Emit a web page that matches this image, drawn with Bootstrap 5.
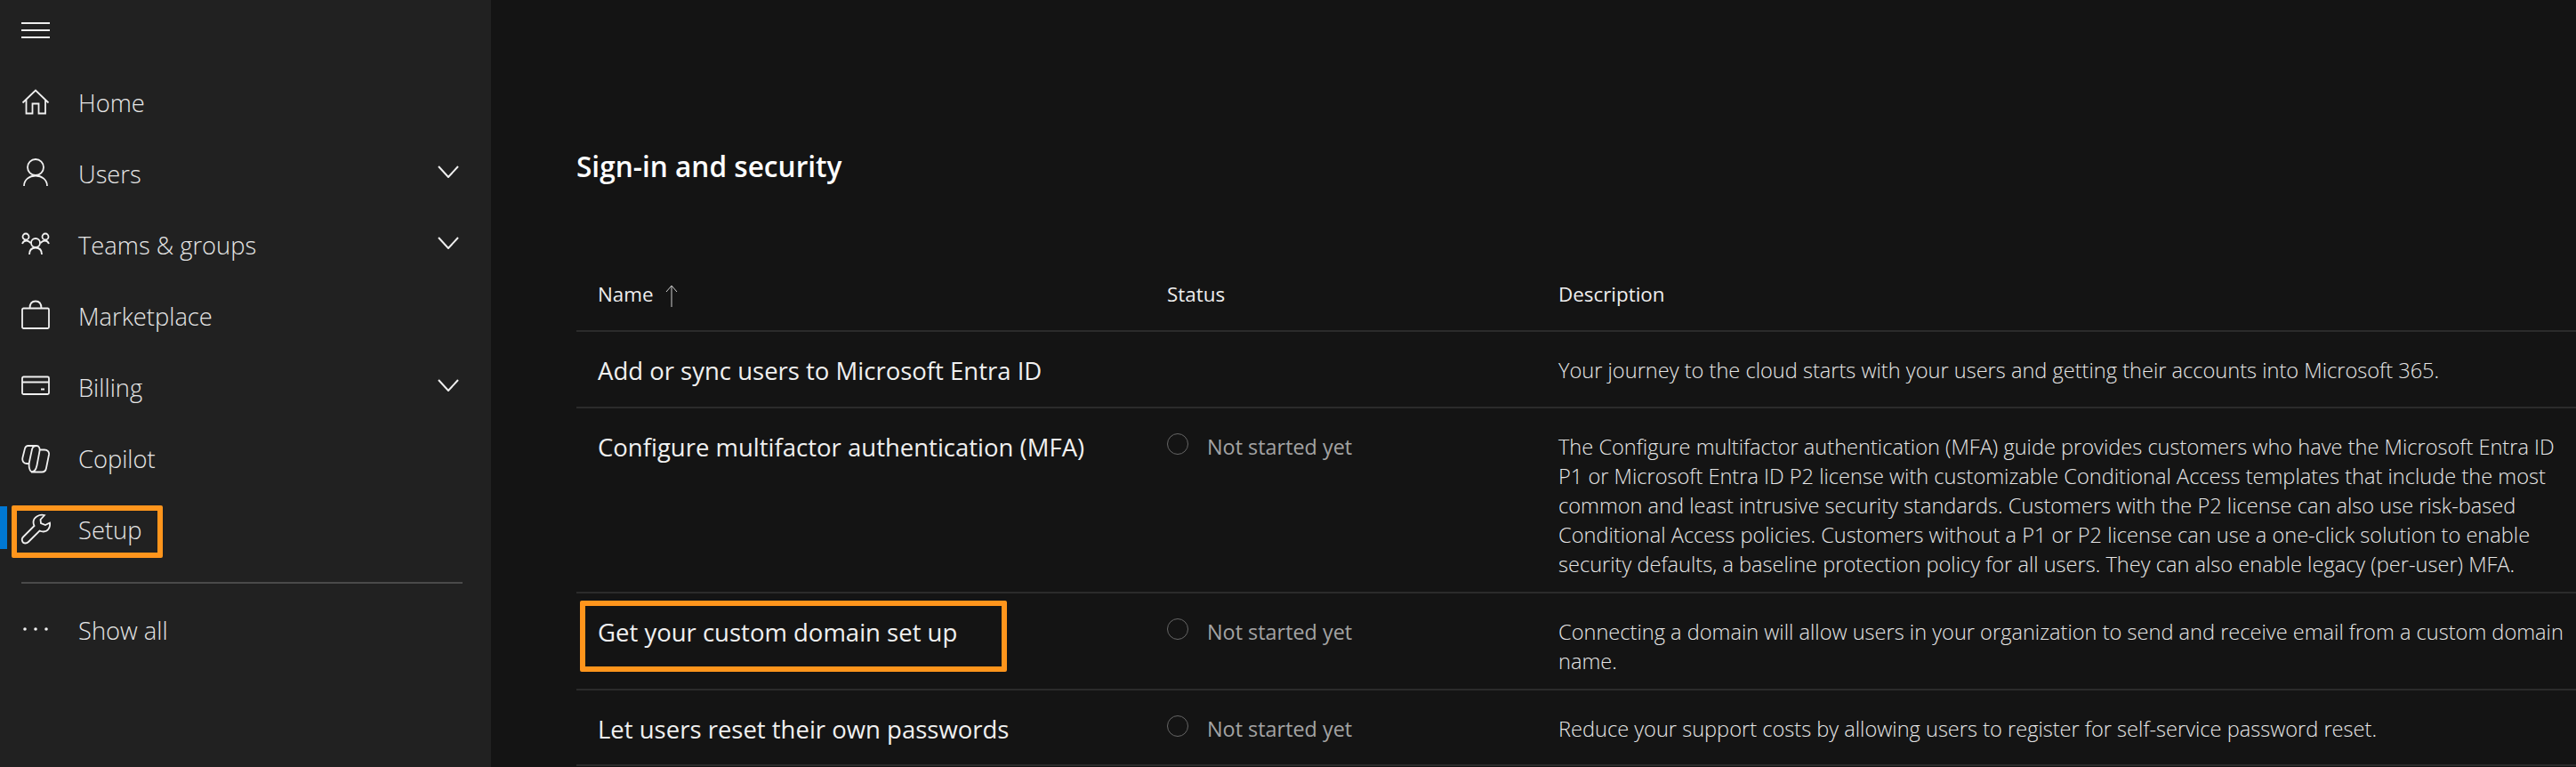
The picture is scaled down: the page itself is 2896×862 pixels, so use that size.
<!DOCTYPE html>
<html lang="en">
<head>
  <meta charset="UTF-8">
  <title>Setup - Microsoft 365 admin center</title>
  <link href="https://cdn.jsdelivr.net/npm/bootstrap@5.3.0/dist/css/bootstrap.min.css" rel="stylesheet">
  <style>
    html, body { height: 862px; overflow: hidden; }
    body {
      background: #141414;
      color: #fff;
      font-family: "Open Sans", "Noto Sans", sans-serif;
    }
    .side-rail {
      width: 552px;
      height: 862px;
      background: #212121;
      flex: none;
      position: relative;
    }
    .burger { height: 75px; padding: 25px 0 0 24px; }
    .burger span { display: block; width: 32px; height: 2px; background: #eee; margin-bottom: 6px; }
    .rail-item {
      height: 80px;
      padding-top: 2px;
      padding-left: 24px;
      padding-right: 36px;
      color: #e6e6e6;
      font-size: 27.3px;
      font-weight: 300;
      text-decoration: none;
    }
    .rail-ico { width: 32px; height: 32px; flex: none; margin-right: 32px; fill: none; stroke: #f0f0f0; stroke-width: 1.8; overflow: visible; }
    .rail-chev { width: 24px; height: 14px; fill: none; stroke: #f0f0f0; stroke-width: 2; margin-top: -6px; }
    .rail-rule { height: 2px; background: #4a4a4a; margin: 19px 32px 12px 24px; }
    .active-bar { position: absolute; left: 0; top: 569px; width: 8px; height: 48px; background: #0078d4; }
    .orange-box { position: absolute; border: 6px solid #ff951c; border-radius: 2px; pointer-events: none; }
    .box-setup { left: 13px; top: 568px; width: 170px; height: 59px; }
    .box-domain { left: 652px; top: 675px; width: 480px; height: 80px; }
    .main-pane { flex: 1; padding: 0 0 0 96px; min-width: 0; }
    .pane-title { font-size: 31.6px; font-weight: 600; margin: 0; padding-top: 165px; height: 291px; line-height: 44px; }
    .task-table { width: 100%; table-layout: fixed; margin: 0; border-collapse: separate; border-spacing: 0; }
    .task-table th, .task-table td { border-bottom: 2px solid #2b2b2b; vertical-align: top; background: transparent; color: #fff; padding: 0 0 0 24px; }
    .task-table th { font-size: 22.4px; font-weight: 400; height: 82px; vertical-align: middle; color: #eee; }
    .task-table th.col-one { font-weight: 500; }
    .task-table td { padding-top: 27px; padding-bottom: 14px; line-height: 33px; }
    .col-one { width: 640px; }
    .col-two { width: 440px; }
    .task-table td.t-name { font-size: 27.5px; font-weight: 500; color: #f0f0f0; }
    .task-table td.t-desc { font-size: 23.6px; font-weight: 300; color: #e6e6e6; padding-right: 8px; }
    .task-table td.t-status { font-size: 23.4px; font-weight: 500; color: #a3a3a3; }
    .status-dot { width: 24px; height: 24px; border: 1.5px solid #666; border-radius: 50%; flex: none; margin-right: 21px; margin-top: -7px; }
    .sort-arrow { fill: none; stroke: #ccc; stroke-width: 1; margin-left: 8px; }
    .h-86 td { height: 86px; }
    .h-85 td { height: 85px; }
  </style>
</head>
<body>
  <div class="d-flex">
    <nav class="side-rail">
      <div class="burger"><span></span><span></span><span></span></div>
      <a class="rail-item d-flex align-items-center" href="#">
        <svg class="rail-ico" viewBox="0 0 32 32"><path d="M1.5 15.5 16 1.5l14.5 14M5.5 12v15.5h7v-11h7v11H27V12"/></svg>Home
      </a>
      <a class="rail-item d-flex align-items-center" href="#">
        <svg class="rail-ico" viewBox="0 0 32 32"><circle cx="16" cy="8" r="9"/><path d="M3 29c0-7 6-11.500 13-11.500S29 22 29 29"/></svg>Users
        <svg class="rail-chev ms-auto" viewBox="0 0 24 14"><path d="M1 1l11 12L23 1"/></svg>
      </a>
      <a class="rail-item d-flex align-items-center" href="#">
        <svg class="rail-ico" viewBox="0 0 32 32"><circle cx="5" cy="6" r="3.500"/><circle cx="27" cy="6" r="3.500"/><circle cx="16" cy="13" r="5"/><path d="M1 14c1-2.500 2.500-3.500 4.500-3.500s3.500 1 5 2.500M31 14c-1-2.500-2.500-3.500-4.500-3.500s-3.500 1-5 2.500M9 26c0-5 3-7.500 7-7.500s7 2.500 7 7.500"/></svg>Teams &amp; groups
        <svg class="rail-chev ms-auto" viewBox="0 0 24 14"><path d="M1 1l11 12L23 1"/></svg>
      </a>
      <a class="rail-item d-flex align-items-center" href="#">
        <svg class="rail-ico" viewBox="0 0 32 32"><rect x="1" y="6.500" width="30" height="22.500" rx="1.500"/><path d="M9.500 6.500C9.500 1 12-1.500 16-1.500s6.500 2.500 6.500 8"/></svg>Marketplace
      </a>
      <a class="rail-item d-flex align-items-center" href="#">
        <svg class="rail-ico" viewBox="0 0 32 32"><rect x="1" y="3.500" width="30" height="19.500" rx="1.500"/><path d="M1 9.500h30M22 17.500h4"/></svg>Billing
        <svg class="rail-chev ms-auto" viewBox="0 0 24 14"><path d="M1 1l11 12L23 1"/></svg>
      </a>
      <a class="rail-item d-flex align-items-center" href="#">
        <svg class="rail-ico" viewBox="0 0 32 32"><path d="M17 1H7.500C5.500 1 4.500 2.500 4 4L1.500 14C.5 18 2.500 21 6 21h3M17 1c-3 0-4.500 2-5 4L9 19c-1 5 0 11.500 4 11.500M17 1c3 0 4 3 3.500 6l-3 16c-1 5-3.500 7.500-6.500 7.500M21 5.500h5c3.500 0 5.500 2.500 5 5.500l-3 15c-.5 3-2 4.500-5 4.500H11"/></svg>Copilot
      </a>
      <a class="rail-item d-flex align-items-center" href="#">
        <svg class="rail-ico" viewBox="0 0 32 32"><path d="M26-1c-5.500-1.500-12.500 2-12.500 8 0 1.500.5 3 1 4L2 23.500C-.5 26 1 30.500 4.500 30.500c1.500 0 2.500-.5 3.500-1.500l12.500-12.500c1 .5 2.500 1 4.500 1 4.500 0 8-4.500 7-10L27 10l-5-2-.5-4z"/></svg>Setup
      </a>
      <div class="rail-rule"></div>
      <a class="rail-item d-flex align-items-center" href="#">
        <svg class="rail-ico" viewBox="0 0 32 32"><circle cx="4" cy="14" r="1.800" fill="#f0f0f0" stroke="none"/><circle cx="16" cy="14" r="1.800" fill="#f0f0f0" stroke="none"/><circle cx="28" cy="14" r="1.800" fill="#f0f0f0" stroke="none"/></svg>Show all
      </a>
      <div class="active-bar"></div>
    </nav>
    <main class="main-pane">
      <h2 class="pane-title">Sign-in and security</h2>
      <table class="table task-table">
        <thead>
          <tr>
            <th class="col-one">Name <svg class="sort-arrow" width="14" height="26" viewBox="0 0 14 26"><path d="M7 25V1M1 8l6-7 6 7"/></svg></th>
            <th class="col-two">Status</th>
            <th>Description</th>
          </tr>
        </thead>
        <tbody>
          <tr class="h-86">
            <td class="t-name">Add or sync users to Microsoft Entra ID</td>
            <td></td>
            <td class="t-desc">Your journey to the cloud starts with your users and getting their accounts into Microsoft 365.</td>
          </tr>
          <tr>
            <td class="t-name">Configure multifactor authentication (MFA)</td>
            <td class="t-status"><div class="d-flex align-items-center"><span class="status-dot"></span>Not started yet</div></td>
            <td class="t-desc">The Configure multifactor authentication (MFA) guide provides customers who have the Microsoft Entra ID P1 or Microsoft Entra ID P2 license with customizable Conditional Access templates that include the most common and least intrusive security standards. Customers with the P2 license can also use risk-based Conditional Access policies. Customers without a P1 or P2 license can use a one-click solution to enable security defaults, a baseline protection policy for all users. They can also enable legacy (per-user) MFA.</td>
          </tr>
          <tr>
            <td class="t-name">Get your custom domain set up</td>
            <td class="t-status"><div class="d-flex align-items-center"><span class="status-dot"></span>Not started yet</div></td>
            <td class="t-desc">Connecting a domain will allow users in your organization to send and receive email from a custom domain name.</td>
          </tr>
          <tr class="h-85">
            <td class="t-name">Let users reset their own passwords</td>
            <td class="t-status"><div class="d-flex align-items-center"><span class="status-dot"></span>Not started yet</div></td>
            <td class="t-desc">Reduce your support costs by allowing users to register for self-service password reset.</td>
          </tr>
        </tbody>
      </table>
    </main>
  </div>
  <div class="orange-box box-setup"></div>
  <div class="orange-box box-domain"></div>
  <script src="https://cdn.jsdelivr.net/npm/bootstrap@5.3.0/dist/js/bootstrap.bundle.min.js"></script>
</body>
</html>
